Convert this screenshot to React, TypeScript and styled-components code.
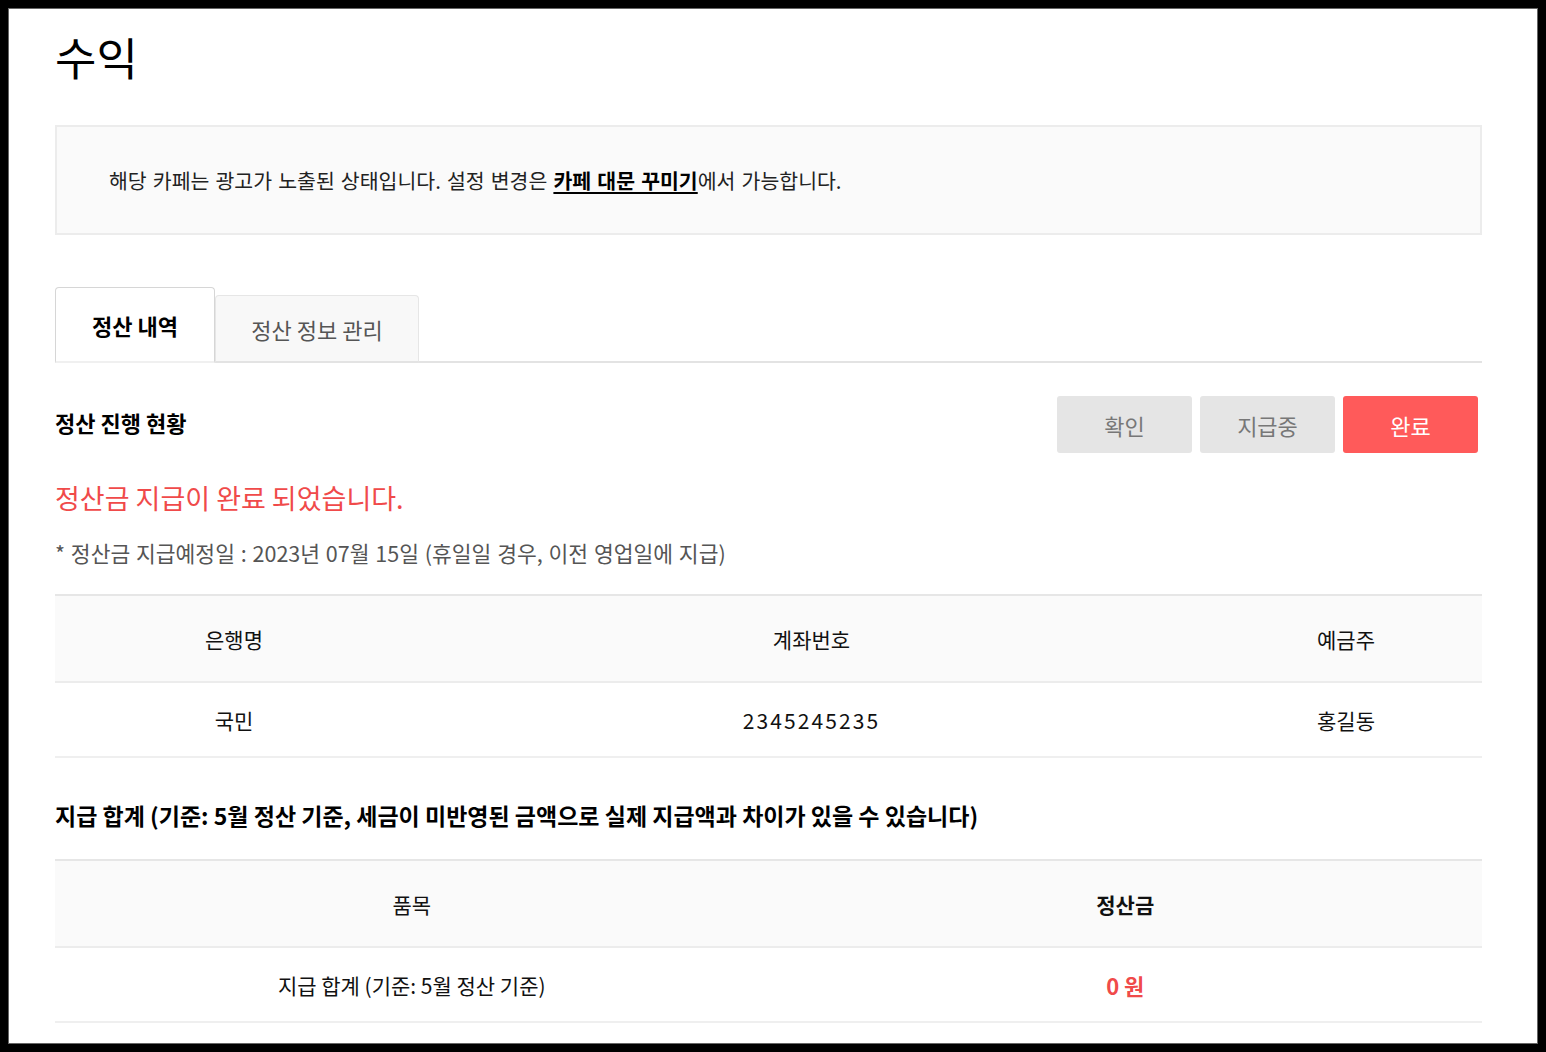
import React from 'react';
import styled, { createGlobalStyle } from 'styled-components';

const GlobalStyle = createGlobalStyle`
	html {
		background: #000;
	}
	body {
		margin: 8px;
		font-family: 'Noto Sans CJK KR', 'Noto Sans', sans-serif;
		color: #111;
	}
	* {
		box-sizing: border-box;
	}
`;

const Page = styled.div`
	min-height: calc(100vh - 16px);
	background: #fff;
	border: 1px solid #666;
	padding: 21px 55px 0 46px;
	overflow: hidden;
`;

const Title = styled.h1`
	margin: 0;
	font-size: 45px;
	font-weight: 400;
	line-height: 54px;
	color: #000;
`;

const NoticeBox = styled.div`
	margin-top: 41px;
	height: 110px;
	display: flex;
	align-items: center;
	padding: 0 52px;
	background: #fafafa;
	border: 2px solid #ececec;
	font-size: 20.5px;
	word-spacing: 1.5px;
	color: #222;
`;

const NoticeLink = styled.a`
	font-weight: 700;
	color: #000;
	text-decoration: underline;
	text-underline-offset: 3px;
`;

const TabBar = styled.div`
	margin-top: 52px;
	display: flex;
	align-items: flex-end;
	border-bottom: 2px solid #e3e3e3;
`;

const Tab = styled.button<{ $active?: boolean }>`
	height: ${(p) => (p.$active ? '76px' : '68px')};
	padding: 0;
	width: ${(p) => (p.$active ? '160px' : '204px')};
	margin-bottom: -2px;
	border: 1px solid ${(p) => (p.$active ? '#d6d6d6' : '#e6e6e6')};
	border-bottom: 2px solid ${(p) => (p.$active ? '#f0f0f0' : '#e3e3e3')};
	border-radius: 4px 4px 0 0;
	background: ${(p) => (p.$active ? '#fff' : '#f8f8f8')};
	font-family: inherit;
	font-size: 22px;
	font-weight: ${(p) => (p.$active ? 700 : 400)};
	color: ${(p) => (p.$active ? '#000' : '#555')};
	cursor: pointer;
`;

const StatusRow = styled.div`
	margin-top: 33px;
	display: flex;
	justify-content: space-between;
	align-items: center;
`;

const SectionTitle = styled.h2`
	margin: 0 0 6px;
	font-size: 22px;
	font-weight: 700;
	color: #000;
`;

const StepGroup = styled.div`
	display: flex;
	gap: 8px;
	margin-right: 4px;
`;

const StepButton = styled.button<{ $done?: boolean }>`
	width: 135px;
	height: 57px;
	border: none;
	border-radius: 3px;
	background: ${(p) => (p.$done ? '#ff5a5a' : '#e5e5e5')};
	color: ${(p) => (p.$done ? '#fff' : '#777')};
	font-family: inherit;
	font-size: 22px;
	font-weight: 400;
`;

const DoneMessage = styled.p`
	margin: 25px 0 0;
	font-size: 27px;
	line-height: 40px;
	color: #f04a4a;
`;

const PayDate = styled.p`
	margin: 18px 0 0;
	font-size: 21.5px;
	word-spacing: 1px;
	line-height: 34px;
	color: #555;
`;

const Table = styled.div<{ $cols: string }>`
	display: grid;
	grid-template-columns: ${(p) => p.$cols};
	border-top: 2px solid #e6e6e6;
	margin-top: 24px;
`;

const HeadCell = styled.div<{ $bold?: boolean }>`
	height: 87px;
	display: flex;
	align-items: center;
	justify-content: center;
	background: #fafafa;
	border-bottom: 2px solid #ececec;
	font-size: 21px;
	font-weight: ${(p) => (p.$bold ? 700 : 400)};
	color: #111;
`;

const BodyCell = styled.div<{ $accent?: boolean; $mono?: boolean }>`
	height: 75px;
	display: flex;
	align-items: center;
	justify-content: center;
	border-bottom: 2px solid #efefef;
	font-size: ${(p) => (p.$accent ? '22px' : '21px')};
	letter-spacing: ${(p) => (p.$mono ? '2.1px' : '0')};
	font-weight: ${(p) => (p.$accent ? 700 : 400)};
	color: ${(p) => (p.$accent ? '#f04a4a' : '#111')};
`;

const SumTitle = styled.h2`
	margin: 37px 0 0;
	font-size: 23px;
	line-height: 40px;
	font-weight: 700;
	color: #000;
`;

const bankInfo = { bank: '국민', account: '2345245235', owner: '홍길동' };

export default function App() {
	const [tab, setTab] = React.useState(0);

	return (
		<>
			<GlobalStyle />
			<Page>
				<Title>수익</Title>
				<NoticeBox>
					<span>
						해당 카페는 광고가 노출된 상태입니다. 설정 변경은 <NoticeLink>카페 대문 꾸미기</NoticeLink>에서 가능합니다.
					</span>
				</NoticeBox>

				<TabBar>
					<Tab $active={tab === 0} onClick={() => setTab(0)}>
						정산 내역
					</Tab>
					<Tab $active={tab === 1} onClick={() => setTab(1)}>
						정산 정보 관리
					</Tab>
				</TabBar>

				<StatusRow>
					<SectionTitle>정산 진행 현황</SectionTitle>
					<StepGroup>
						<StepButton>확인</StepButton>
						<StepButton>지급중</StepButton>
						<StepButton $done>완료</StepButton>
					</StepGroup>
				</StatusRow>

				<DoneMessage>정산금 지급이 완료 되었습니다.</DoneMessage>
				<PayDate>* 정산금 지급예정일 : 2023년 07월 15일 (휴일일 경우, 이전 영업일에 지급)</PayDate>

				<Table $cols="358px 797px 1fr">
					<HeadCell>은행명</HeadCell>
					<HeadCell>계좌번호</HeadCell>
					<HeadCell>예금주</HeadCell>
					<BodyCell>{bankInfo.bank}</BodyCell>
					<BodyCell $mono>{bankInfo.account}</BodyCell>
					<BodyCell>{bankInfo.owner}</BodyCell>
				</Table>

				<SumTitle>지급 합계 (기준: 5월 정산 기준, 세금이 미반영된 금액으로 실제 지급액과 차이가 있을 수 있습니다)</SumTitle>
				<Table $cols="1fr 1fr">
					<HeadCell>품목</HeadCell>
					<HeadCell $bold>정산금</HeadCell>
					<BodyCell>지급 합계 (기준: 5월 정산 기준)</BodyCell>
					<BodyCell $accent>0 원</BodyCell>
				</Table>
			</Page>
		</>
	);
}
